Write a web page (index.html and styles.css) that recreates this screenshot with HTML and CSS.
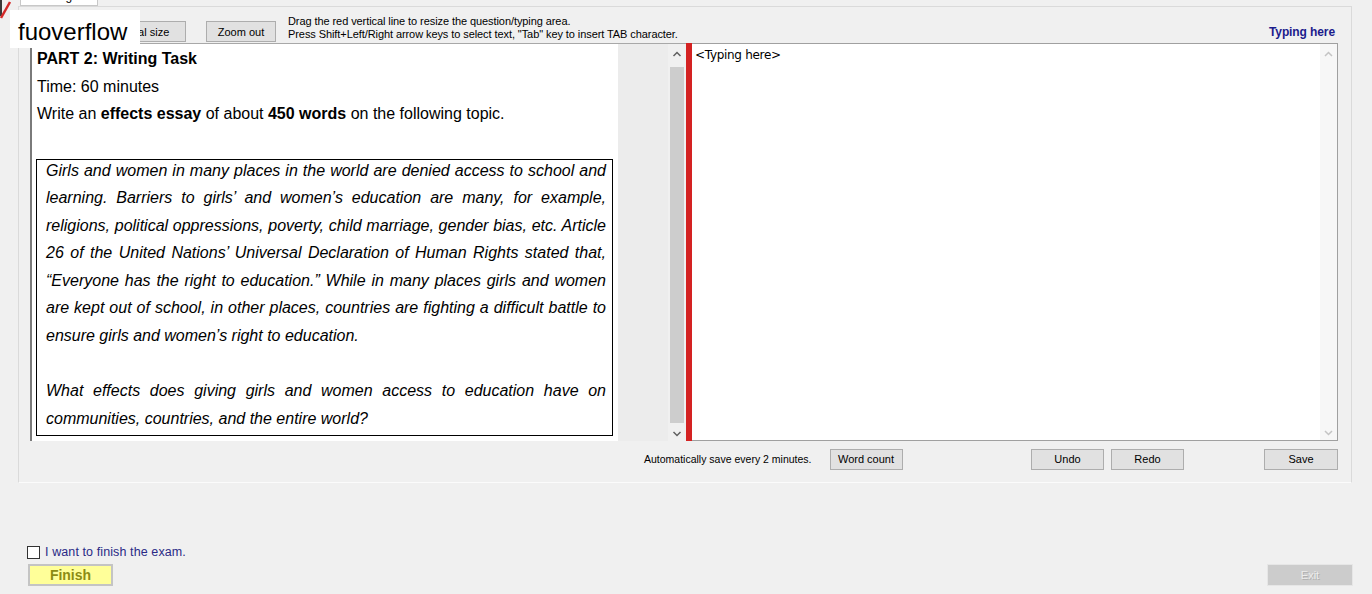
FILE: index.html
```html
<!DOCTYPE html>
<html>
<head>
  <meta charset="utf-8">
  <title>Writing</title>
  <meta name="viewport" content="width=device-width, initial-scale=1">
  <link rel="stylesheet" href="styles.css">
</head>
<body>
  <svg class="corner" width="12" height="22" viewBox="0 0 12 22">
    <line x1="1" y1="0" x2="1" y2="16" stroke="#3a3a3a" stroke-width="2"/>
    <line x1="1" y1="18" x2="10" y2="2" stroke="#d42a2a" stroke-width="2.5"/>
  </svg>
  <div class="tabs"><div class="tab"><span>Writing</span></div></div>

  <section class="panel">
    <div class="toolbar">
      <button type="button" class="btn original">Original size</button>
      <button type="button" class="btn zoom">Zoom out</button>
      <p class="hint">Drag the red vertical line to resize the question/typing area.<br>Press Shift+Left/Right arrow keys to select text, "Tab" key to insert TAB character.</p>
      <span class="typing-label">Typing here</span>
    </div>

    <div class="workspace">
      <div class="question">
        <div class="question-body">
          <p class="q-line"><b>PART 2: Writing Task</b></p>
          <p class="q-line">Time: 60 minutes</p>
          <p class="q-line">Write an <b>effects essay</b> of about <b>450 words</b> on the following topic.</p>
          <div class="topic">
            <p>Girls and women in many places in the world are denied access to school and learning. Barriers to girls’ and women’s education are many, for example, religions, political oppressions, poverty, child marriage, gender bias, etc. Article 26 of the United Nations’ Universal Declaration of Human Rights stated that, “Everyone has the right to education.” While in many places girls and women are kept out of school, in other places, countries are fighting a difficult battle to ensure girls and women’s right to education.</p>
            <p>What effects does giving girls and women access to education have on communities, countries, and the entire world?</p>
          </div>
        </div>
        <div class="question-gap"></div>
        <div class="scroll">
          <svg class="arrow" width="18" height="14" viewBox="0 0 18 14"><path d="M5.5 9 9 5.5 12.5 9" fill="none" stroke="#606060" stroke-width="1.5"/></svg>
          <div class="thumb"></div>
          <svg class="arrow" width="18" height="14" viewBox="0 0 18 14"><path d="M5.5 5 9 8.5 12.5 5" fill="none" stroke="#606060" stroke-width="1.5"/></svg>
        </div>
      </div>

      <div class="splitter"></div>

      <div class="answer">
        <div class="answer-text">&lt;Typing here&gt;</div>
        <div class="scroll scroll-off">
          <svg class="arrow" width="17" height="14" viewBox="0 0 17 14"><path d="M5 9 8.5 5.5 12 9" fill="none" stroke="#c4c4c4" stroke-width="1.5"/></svg>
          <div class="track"></div>
          <svg class="arrow" width="17" height="14" viewBox="0 0 17 14"><path d="M5 5 8.5 8.5 12 5" fill="none" stroke="#c4c4c4" stroke-width="1.5"/></svg>
        </div>
      </div>
    </div>

    <div class="statusbar">
      <span class="autosave">Automatically save every 2 minutes.</span>
      <button type="button" class="btn wordcount">Word count</button>
      <button type="button" class="btn undo">Undo</button>
      <button type="button" class="btn redo">Redo</button>
      <button type="button" class="btn save">Save</button>
    </div>
  </section>

  <section class="finish-area">
    <label class="confirm"><span class="box"></span>I want to finish the exam.</label>
    <div class="finish-row">
      <button type="button" class="finish">Finish</button>
      <button type="button" class="exit" disabled>Exit</button>
    </div>
  </section>

  <div class="watermark">fuoverflow</div>
</body>
</html>
```

FILE: styles.css
```css
* {
  box-sizing: border-box;
}
body {
  margin: 0;
  height: 594px;
  overflow: hidden;
  position: relative;
  background-color: #f0f0f0;
  font-family: "Liberation Sans", Arial, sans-serif;
  color: #000;
}
p {
  margin: 0;
}
.corner {
  position: absolute;
  left: 0;
  top: 0;
}
.tabs {
  height: 6px;
  padding-left: 20px;
}
.tab {
  width: 78px;
  height: 6px;
  overflow: hidden;
  background: #fff;
  border: 1px solid #c8c8c8;
  border-top: none;
  font-size: 12px;
  line-height: 12px;
  padding-left: 14px;
}
.tab span {
  display: block;
  margin-top: -10px;
}

/* main tab page */
.panel {
  margin-left: 18px;
  width: 1334px;
  height: 477px;
  border: 1px solid #dadada;
  border-bottom-color: #fbfbfb;
  background: #f0f0f0;
}
.btn {
  height: 21px;
  width: 70px;
  padding: 0;
  border: 1px solid #adadad;
  background: #e1e1e1;
  font-family: "Liberation Sans", Arial, sans-serif;
  font-size: 11px;
  color: #000;
}
.toolbar {
  height: 36px;
  display: flex;
  align-items: flex-end;
  padding: 0 16px 1px 73px;
}
.original {
  width: 94px;
}
.zoom {
  margin-left: 20px;
}
.hint {
  align-self: flex-start;
  margin: 8px 0 0 12px;
  font-size: 11px;
  line-height: 13px;
  letter-spacing: -0.08px;
}
.typing-label {
  margin-left: auto;
  align-self: center;
  margin-top: 14px;
  font-size: 12px;
  font-weight: bold;
  letter-spacing: -0.1px;
  color: #1c1c8c;
}

/* question + typing panes */
.workspace {
  display: flex;
  margin-left: 11px;
  width: 1308px;
  height: 398px;
}
.question {
  width: 656px;
  display: flex;
  border-top: 1px solid #a8a8a8;
  border-left: 2px solid #7a7a7a;
}
.question-body {
  width: 586px;
  background: #fff;
  padding: 1px 0 0 4px;
  font-size: 16px;
  line-height: 27.5px;
}
.q-line {
  padding-left: 1px;
}
.q-line:nth-child(3) {
  margin-bottom: 31px;
}
.topic {
  width: 577px;
  height: 277px;
  border: 1px solid #000;
  padding: 0 6px 0 9px;
  font-style: italic;
  text-align: justify;
}
.topic p {
  margin-top: -3px;
  margin-bottom: 28px;
}
.topic p + p {
  margin-top: 0;
}
.question-gap {
  flex: 1;
  background: #ececec;
}
.scroll {
  width: 18px;
  display: flex;
  flex-direction: column;
  background: #f0f0f0;
}
.arrow {
  display: block;
  margin-top: 3px;
}
.thumb {
  flex: 1;
  margin: 6px 2px 1px;
  background: #cdcdcd;
}
.splitter {
  width: 6px;
  background: #d42222;
}
.answer {
  flex: 1;
  display: flex;
  background: #fff;
  border: 1px solid #a0a0a0;
  border-left: none;
}
.answer-text {
  flex: 1;
  padding: 4px 3px;
  font-family: "DejaVu Sans", sans-serif;
  font-size: 12px;
  letter-spacing: -0.3px;
}
.scroll-off {
  width: 17px;
  background: #f7f7f7;
}
.track {
  flex: 1;
}

/* save / undo row */
.statusbar {
  display: flex;
  align-items: center;
  padding: 7px 13px 0 625px;
  height: 29px;
}
.autosave {
  font-size: 10.5px;
}
.wordcount {
  margin-left: 18px;
  width: 73px;
}
.undo {
  margin-left: auto;
  width: 73px;
}
.redo {
  margin-left: 7px;
  width: 73px;
}
.save {
  margin-left: 80px;
  width: 74px;
}

/* finish exam */
.finish-area {
  padding-top: 62px;
}
.confirm {
  display: flex;
  align-items: center;
  padding-left: 27px;
  font-size: 12.5px;
  letter-spacing: 0.1px;
  color: #2a2a86;
}
.box {
  width: 13px;
  height: 13px;
  border: 1px solid #333;
  background: #fff;
  margin-right: 5px;
}
.finish-row {
  display: flex;
  justify-content: space-between;
  padding: 5px 19px 0 28px;
}
.finish {
  width: 85px;
  height: 22px;
  padding: 0;
  background: #ffff99;
  border: 2px solid #c4c4c4;
  font-family: "Liberation Sans", Arial, sans-serif;
  font-size: 14px;
  font-weight: bold;
  color: #8c8c14;
}
.exit {
  width: 86px;
  height: 22px;
  padding: 0;
  background: #cccccc;
  border: 1px solid #e6e6e6;
  font-family: "Liberation Sans", Arial, sans-serif;
  font-size: 11px;
  color: #ececec;
  text-shadow: 1px 1px 0 #b0b0b0;
}

.watermark {
  position: absolute;
  left: 10px;
  top: 10px;
  width: 130px;
  height: 38px;
  background: #fff;
  padding: 8px 0 0 8px;
  font-size: 24px;
  line-height: 28px;
}
```
